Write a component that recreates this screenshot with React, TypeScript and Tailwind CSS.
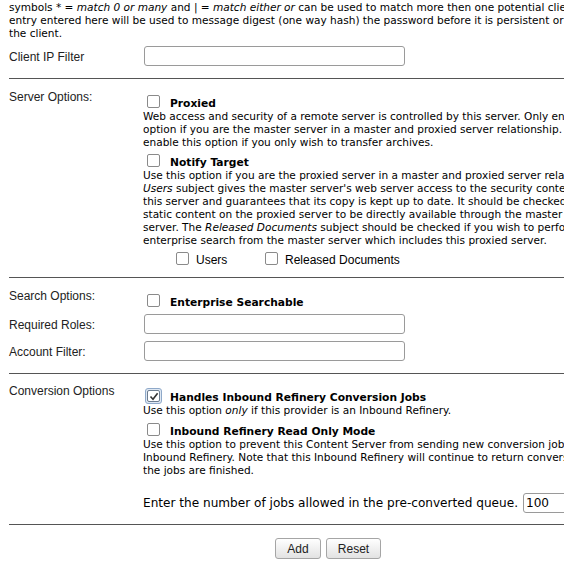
import React from 'react'

const dv = "font-['DejaVu_Sans',sans-serif]"
const lib = "font-['Liberation_Sans',Arial,sans-serif]"

function Box({ checked = false }: { checked?: boolean }) {
  if (checked) {
    return (
      <span className="ml-[2px] -mt-[1px] w-[17px] h-[16px] shrink-0 rounded-[3px] border border-[#8fa9c9] bg-[#dfe8f3] flex items-center justify-center">
        <span className="w-[13px] h-[12px] rounded-[2px] border border-[#6d7d90] bg-white flex items-center justify-center">
          <svg width="10" height="9" viewBox="0 0 10 9">
            <path d="M1.5 4.5 L4 7.2 L8.6 1.2" fill="none" stroke="#333" strokeWidth="1.6" />
          </svg>
        </span>
      </span>
    )
  }
  return <span className="ml-[4px] w-[13px] h-[13px] shrink-0 rounded-[2px] border border-[#8a8a8a] bg-white" />
}

function Option({ title, checked }: { title: string; checked?: boolean }) {
  return (
    <div className="flex items-start h-[15px]">
      <Box checked={checked} />
      <span className={`${checked ? 'ml-[8px]' : 'ml-[10px]'} pt-[2px] leading-[13px] text-[10.7px] font-bold text-black`}>{title}</span>
    </div>
  )
}

function Field() {
  return <div className="ml-px w-[261px] h-[20px] rounded-[3px] border border-[#9a9a9a] bg-white" />
}

function Rule({ className = '' }: { className?: string }) {
  return <div className={`ml-[9px] h-px bg-[#555] ${className}`} />
}

export default function App() {
  return (
    <div className="w-[564px] h-[569px] overflow-hidden bg-white">
      <div className="w-[900px] -mt-[12px] text-black">
        <div className={`pl-[9px] ${dv} text-[10.55px] leading-[13px] whitespace-nowrap`}>
          <div>Enter a list of IP addresses that are allowed to connect to this provider. The wildcard</div>
          <div>
            symbols * = <i>match 0 or many</i> and | = <i>match either or</i> can be used to match more then one potential client. The password
          </div>
          <div>entry entered here will be used to message digest (one way hash) the password before it is persistent or sent to</div>
          <div>the client.</div>
        </div>

        <div className="flex items-center mt-[6px] h-[20px]">
          <div className={`pl-[9px] w-[143px] shrink-0 pt-[2px] ${lib} text-[12px] text-[#222]`}>Client IP Filter</div>
          <Field />
        </div>

        <Rule className="mt-[12px]" />

        <div className="flex">
          <div className={`pl-[9px] w-[143px] shrink-0 pt-[11px] ${lib} text-[12px] leading-[14px] text-[#222]`}>Server Options:</div>
          <div className={`pt-[16px] ${dv} text-[10.55px] leading-[13px] whitespace-nowrap`}>
            <Option title="Proxied" />
            <div>Web access and security of a remote server is controlled by this server. Only enable this</div>
            <div>option if you are the master server in a master and proxied server relationship. Do not</div>
            <div>enable this option if you only wish to transfer archives.</div>
            <div className="mt-[5px]">
              <Option title="Notify Target" />
            </div>
            <div>Use this option if you are the proxied server in a master and proxied server relationship. The</div>
            <div>
              <i>Users</i> subject gives the master server's web server access to the security context of
            </div>
            <div>this server and guarantees that its copy is kept up to date. It should be checked to allow</div>
            <div>static content on the proxied server to be directly available through the master</div>
            <div>
              server. The <i>Released Documents</i> subject should be checked if you wish to perform an
            </div>
            <div>enterprise search from the master server which includes this proxied server.</div>
            <div className={`mt-[5px] flex items-start pl-[29px] ${lib} text-[12px] leading-[14px]`}>
              <Box />
              <span className="ml-[7px] mt-[1px] w-[65px]">Users</span>
              <Box />
              <span className="ml-[7px] mt-[1px]">Released Documents</span>
            </div>
          </div>
        </div>

        <Rule className="mt-[10px]" />

        <div className="flex">
          <div className={`pl-[9px] w-[143px] shrink-0 pt-[11px] ${lib} text-[12px] leading-[14px] text-[#222]`}>Search Options:</div>
          <div className={`pt-[16px] ${dv} text-[10.55px] leading-[13px] whitespace-nowrap`}>
            <Option title="Enterprise Searchable" />
          </div>
        </div>
        <div className="flex items-center mt-[5px] h-[20px]">
          <div className={`pl-[9px] w-[143px] shrink-0 pt-[2px] ${lib} text-[12px] text-[#222]`}>Required Roles:</div>
          <Field />
        </div>
        <div className="flex items-center mt-[7px] h-[20px]">
          <div className={`pl-[9px] w-[143px] shrink-0 pt-[2px] ${lib} text-[12px] text-[#222]`}>Account Filter:</div>
          <Field />
        </div>

        <Rule className="mt-[12px]" />

        <div className="flex">
          <div className={`pl-[9px] w-[143px] shrink-0 pt-[10px] ${lib} text-[12px] leading-[14px] text-[#222]`}>Conversion Options</div>
          <div className={`pt-[15px] ${dv} text-[10.55px] leading-[13px] whitespace-nowrap`}>
            <Option title="Handles Inbound Refinery Conversion Jobs" checked />
            <div>
              Use this option <i>only</i> if this provider is an Inbound Refinery.
            </div>
            <div className="mt-[6px]">
              <Option title="Inbound Refinery Read Only Mode" />
            </div>
            <div>Use this option to prevent this Content Server from sending new conversion jobs to the</div>
            <div>Inbound Refinery. Note that this Inbound Refinery will continue to return conversions until</div>
            <div>the jobs are finished.</div>
            <div className="mt-[16px] flex items-center h-[20px] text-[12.1px]">
              <span>Enter the number of jobs allowed in the pre-converted queue.</span>
              <div className="ml-[5px] w-[60px] h-[20px] rounded-[3px] border border-[#9a9a9a] bg-white pl-[2px] leading-[18px]">100</div>
            </div>
          </div>
        </div>

        <Rule className="mt-[11px]" />

        <div className={`mt-[13px] flex gap-[5px] pl-[275px] ${lib} text-[12px]`}>
          <button className="w-[46px] h-[21px] rounded-[3px] border border-[#a5a5a5] bg-gradient-to-b from-white to-[#e2e2e2] text-[#222]">Add</button>
          <button className="w-[55px] h-[21px] rounded-[3px] border border-[#a5a5a5] bg-gradient-to-b from-white to-[#e2e2e2] text-[#222]">Reset</button>
        </div>
      </div>
    </div>
  )
}
